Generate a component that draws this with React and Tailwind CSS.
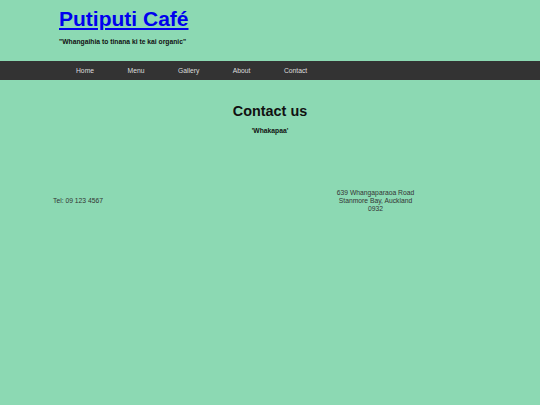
import React from 'react'

export default function App() {
  const links = ['Home', 'Menu', 'Gallery', 'About', 'Contact']

  return (
    <div
      className="min-h-[405px] bg-[#8cd9b3] text-[#111]"
      style={{ fontFamily: '"Liberation Sans", Arial, sans-serif' }}
    >
      {/* Header */}
      <header className="pl-[59px] pt-[7px]">
        <h1 className="text-[21px] font-bold leading-[1.15]">
          <a href="#" className="text-[#0000ee] underline">Putiputi Café</a>
        </h1>
        <p className="mt-[7px] text-[6.75px] font-bold leading-[1.15]">
          "Whangaihia to tinana ki te kai organic"
        </p>
      </header>

      {/* Nav */}
      <nav className="mt-[15px] flex h-[19px] items-center gap-[33.5px] bg-[#333] pl-[76px] pt-[2px]">
        {links.map(link => (
          <a key={link} href="#" className="text-[6.75px] leading-none text-[#ddd]">
            {link}
          </a>
        ))}
      </nav>

      {/* Content */}
      <main>
        <div className="mt-[23px] text-center">
          <h2 className="text-[14.4px] font-bold leading-[1.15]">Contact us</h2>
          <p className="mt-[8px] text-[6.75px] font-bold leading-[1.15]">'Whakapaa'</p>
        </div>

        <div className="mt-[54px] grid grid-cols-2 items-center pl-[53px] pr-[57px] text-[6.75px] leading-[1.17] text-[#333]">
          <div>Tel: 09 123 4567</div>
          <div className="text-center">
            <div>639 Whangaparaoa Road</div>
            <div>Stanmore Bay, Auckland</div>
            <div>0932</div>
          </div>
        </div>
      </main>
    </div>
  )
}
